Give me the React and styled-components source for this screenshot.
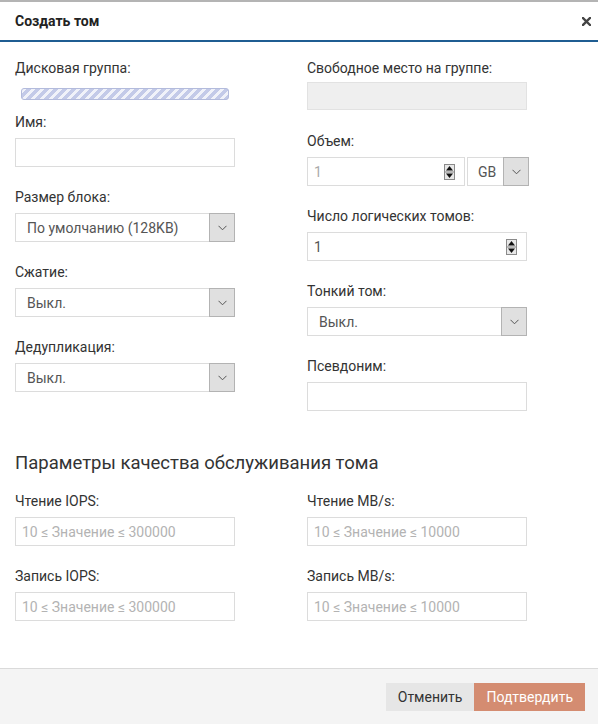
import React from "react";
import styled, { createGlobalStyle } from "styled-components";

const GlobalStyle = createGlobalStyle`
  body {
    margin: 0;
    font-family: Roboto, "Liberation Sans", Arial, sans-serif;
    background: #fff;
  }
`;

const Dialog = styled.div`
  width: 598px;
  height: 724px;
  box-sizing: border-box;
  display: flex;
  flex-direction: column;
  border-top: 2px solid #b4b4b4;
  background: #fff;
  color: #333;
  font-size: 14px;
`;

const Header = styled.div`
  height: 38px;
  display: flex;
  align-items: center;
  justify-content: space-between;
  padding: 0 7px 0 15px;
  border-bottom: 2px solid #1f5d92;

  h1 {
    margin: 0;
    font-size: 14px;
    font-weight: 700;
    color: #222;
  }
`;

const Close = styled.button`
  border: 0;
  background: none;
  padding: 0;
  width: 9px;
  height: 9px;
  display: flex;
  cursor: pointer;
`;

const Body = styled.div`
  flex: 1;
  padding: 18px 15px 0;
`;

const Columns = styled.div`
  display: grid;
  grid-template-columns: 220px 222px;
  column-gap: 72px;
  align-items: start;
`;

const Column = styled.div`
  display: flex;
  flex-direction: column;
`;

const Field = styled.div`
  margin-bottom: ${(p) => p.$mb ?? 22}px;
`;

const Label = styled.label`
  display: block;
  line-height: 17px;
  margin-bottom: ${(p) => p.$mb ?? 7}px;
  color: #333;
`;

const ProgressWrap = styled.div`
  padding: 4px 6px 0 6px;
`;

const Progress = styled.div`
  height: 12px;
  box-sizing: border-box;
  border: 1px solid #b3bbdc;
  border-radius: 3px;
  background-color: #c3cae8;
  background-image: linear-gradient(
    135deg,
    rgba(255, 255, 255, 0.75) 25%,
    transparent 25%,
    transparent 50%,
    rgba(255, 255, 255, 0.75) 50%,
    rgba(255, 255, 255, 0.75) 75%,
    transparent 75%,
    transparent
  );
  background-size: 9px 9px;
`;

const ReadBox = styled.div`
  width: 220px;
  height: 28px;
  box-sizing: border-box;
  border: 1px solid #e2e2e2;
  background: #efefef;
`;

const Input = styled.div`
  width: ${(p) => p.$w ?? 220}px;
  height: 29px;
  box-sizing: border-box;
  border: 1px solid #dcdcdc;
  background: #fff;
  display: flex;
  align-items: center;
  padding: 0 9px 0 6px;
  color: ${(p) => (p.$muted ? "#aaa" : "#555")};

  span {
    flex: 1;
  }
`;

const Placeholder = styled.span`
  color: #b3b3b3;
`;

const Select = styled.div`
  width: ${(p) => p.$w ?? 220}px;
  height: 29px;
  box-sizing: border-box;
  border: 1px solid #dcdcdc;
  background: #fff;
  display: flex;
  align-items: stretch;
  color: #555;

  span {
    flex: 1;
    display: flex;
    align-items: center;
    padding-left: ${(p) => p.$pad ?? 11}px;
  }
`;

const ArrowBox = styled.div`
  width: 26px;
  margin: -1px -1px -1px 0;
  box-sizing: border-box;
  border: 1px solid #b3b3b3;
  background: #e0e0e0;
  display: flex;
  align-items: center;
  justify-content: center;
`;

const Row = styled.div`
  display: flex;
  gap: 2px;
`;

const Heading = styled.h2`
  margin: 19px 0 19px;
  font-size: 18.5px;
  line-height: 22px;
  font-weight: 400;
  color: #333;
`;

const Footer = styled.div`
  border-top: 1px solid #dadada;
  background: #f4f4f4;
  height: 56px;
  box-sizing: border-box;
  padding: 14px 13px 0 0;
  display: flex;
  justify-content: flex-end;
  align-items: flex-start;
`;

const Button = styled.button`
  height: 28px;
  border: 0;
  padding: 0 12px;
  font-family: inherit;
  font-size: 14px;
  background: ${(p) => (p.$primary ? "#d48c71" : "#e6e6e6")};
  color: ${(p) => (p.$primary ? "#fff" : "#333")};
  cursor: pointer;
`;

function Chevron() {
  return (
    <svg width="9" height="6" viewBox="0 0 9 6">
      <polyline points="0.5,0.8 4.5,4.8 8.5,0.8" fill="none" stroke="#555" strokeWidth="1" />
    </svg>
  );
}

function Spinner() {
  return (
    <svg width="11" height="16" viewBox="0 0 11 16">
      <rect x="0.5" y="0.5" width="10" height="15" fill="#e8e8e8" stroke="#8a8a8a" />
      <line x1="1" y1="8" x2="10" y2="8" stroke="#8a8a8a" />
      <polygon points="2,6.5 9,6.5 5.5,2" fill="#111" />
      <polygon points="2,9.5 9,9.5 5.5,14" fill="#111" />
    </svg>
  );
}

function CloseIcon() {
  return (
    <svg width="9" height="9" viewBox="0 0 9 9">
      <path d="M1 1 L8 8 M8 1 L1 8" stroke="#444" strokeWidth="2.4" strokeLinecap="square" />
    </svg>
  );
}

function SelectBox({ value, w, pad }) {
  return (
    <Select $w={w} $pad={pad}>
      <span>{value}</span>
      <ArrowBox>
        <Chevron />
      </ArrowBox>
    </Select>
  );
}

function App() {
  return (
    <>
      <GlobalStyle />
      <Dialog>
        <Header>
          <h1>Создать том</h1>
          <Close aria-label="close">
            <CloseIcon />
          </Close>
        </Header>
        <Body>
          <Columns>
            <Column>
              <Field $mb={14}>
                <Label>Дисковая группа:</Label>
                <ProgressWrap>
                  <Progress />
                </ProgressWrap>
              </Field>
              <Field>
                <Label>Имя:</Label>
                <Input />
              </Field>
              <Field>
                <Label>Размер блока:</Label>
                <SelectBox value="По умолчанию (128KB)" />
              </Field>
              <Field>
                <Label>Сжатие:</Label>
                <SelectBox value="Выкл." />
              </Field>
              <Field>
                <Label>Дедупликация:</Label>
                <SelectBox value="Выкл." />
              </Field>
            </Column>
            <Column>
              <Field $mb={23}>
                <Label $mb={5}>Свободное место на группе:</Label>
                <ReadBox />
              </Field>
              <Field>
                <Label>Объем:</Label>
                <Row>
                  <Input $w={158} $muted>
                    <span>1</span>
                    <Spinner />
                  </Input>
                  <SelectBox value="GB" w={62} pad={10} />
                </Row>
              </Field>
              <Field>
                <Label>Число логических томов:</Label>
                <Input>
                  <span>1</span>
                  <Spinner />
                </Input>
              </Field>
              <Field>
                <Label>Тонкий том:</Label>
                <SelectBox value="Выкл." pad={11} />
              </Field>
              <Field>
                <Label>Псевдоним:</Label>
                <Input />
              </Field>
            </Column>
          </Columns>

          <Heading>Параметры качества обслуживания тома</Heading>

          <Columns>
            <Column>
              <Field>
                <Label>Чтение IOPS:</Label>
                <Input>
                  <Placeholder>10 ≤ Значение ≤ 300000</Placeholder>
                </Input>
              </Field>
              <Field>
                <Label>Запись IOPS:</Label>
                <Input>
                  <Placeholder>10 ≤ Значение ≤ 300000</Placeholder>
                </Input>
              </Field>
            </Column>
            <Column>
              <Field>
                <Label>Чтение MB/s:</Label>
                <Input>
                  <Placeholder>10 ≤ Значение ≤ 10000</Placeholder>
                </Input>
              </Field>
              <Field>
                <Label>Запись MB/s:</Label>
                <Input>
                  <Placeholder>10 ≤ Значение ≤ 10000</Placeholder>
                </Input>
              </Field>
            </Column>
          </Columns>
        </Body>
        <Footer>
          <Button>Отменить</Button>
          <Button $primary>Подтвердить</Button>
        </Footer>
      </Dialog>
    </>
  );
}

export default App;
